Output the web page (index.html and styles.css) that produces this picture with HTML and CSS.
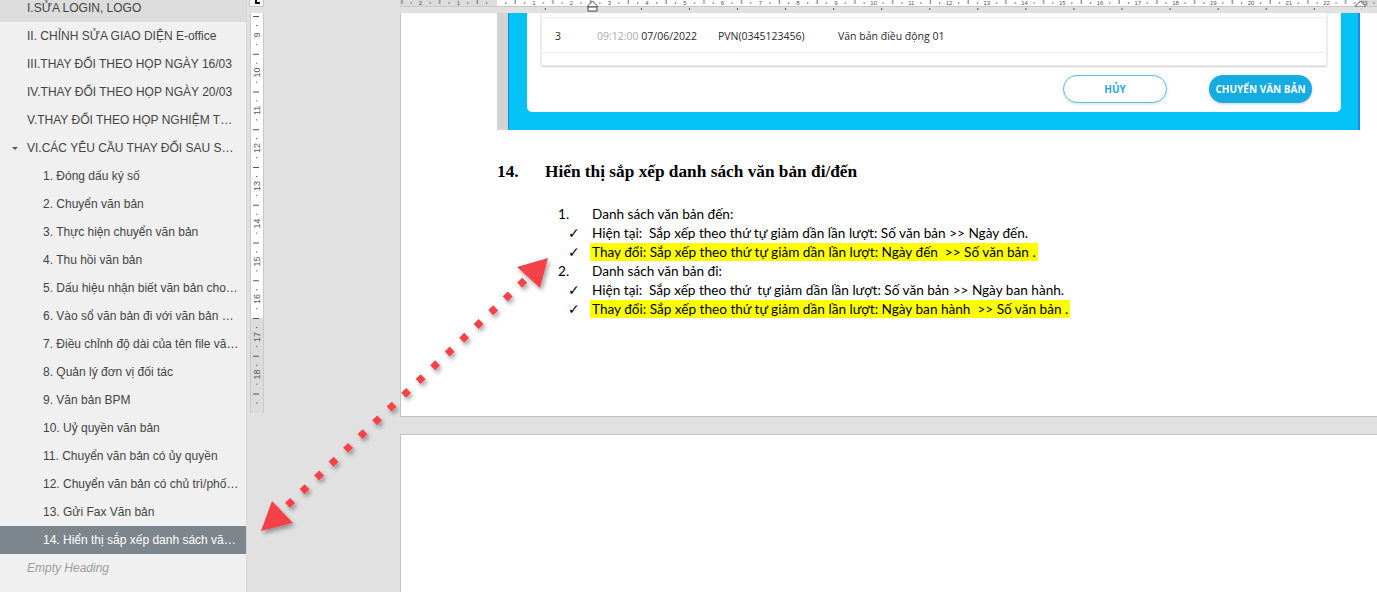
FILE: index.html
```html
<!DOCTYPE html>
<html lang="vi">
<head>
<meta charset="utf-8">
<title>Navigation</title>
<link rel="stylesheet" href="styles.css">
</head>
<body>
<div class="app">
  <aside class="nav">
    <ul class="nav-list">
      <li class="nav-item hover">I.SỬA LOGIN, LOGO</li>
      <li class="nav-item">II. CHỈNH SỬA GIAO DIỆN E-office</li>
      <li class="nav-item">III.THAY ĐỔI THEO HỌP NGÀY 16/03</li>
      <li class="nav-item">IV.THAY ĐỔI THEO HỌP NGÀY 20/03</li>
      <li class="nav-item">V.THAY ĐỔI THEO HỌP NGHIỆM T…</li>
      <li class="nav-item has-caret"><span class="caret"></span>VI.CÁC YÊU CẦU THAY ĐỔI SAU S…</li>
      <li class="nav-item sub">1. Đóng dấu ký số</li>
      <li class="nav-item sub">2. Chuyển văn bản</li>
      <li class="nav-item sub">3. Thực hiện chuyển văn bản</li>
      <li class="nav-item sub">4. Thu hồi văn bản</li>
      <li class="nav-item sub">5. Dấu hiệu nhận biết văn bản cho…</li>
      <li class="nav-item sub">6. Vào sổ văn bản đi với văn bản …</li>
      <li class="nav-item sub">7. Điều chỉnh độ dài của tên file vă…</li>
      <li class="nav-item sub">8. Quản lý đơn vị đối tác</li>
      <li class="nav-item sub">9. Văn bản BPM</li>
      <li class="nav-item sub">10. Uỷ quyền văn bản</li>
      <li class="nav-item sub">11. Chuyển văn bản có ủy quyền</li>
      <li class="nav-item sub">12. Chuyển văn bản có chủ trì/phố…</li>
      <li class="nav-item sub">13. Gửi Fax Văn bản</li>
      <li class="nav-item sub active">14. Hiển thị sắp xếp danh sách vă…</li>
      <li class="nav-item empty">Empty Heading</li>
    </ul>
  </aside>

  <main class="workspace">
    <div class="vcol">
      <div class="tab-sel"><span class="tab-l"></span></div>
      <div class="vruler">
        <svg width="12" height="400" viewBox="0 0 12 400">
          <defs>
            <pattern id="vt" x="0" y="3" width="12" height="37.75" patternUnits="userSpaceOnUse">
              <rect x="2" y="0" width="6" height="1" fill="#555"/>
              <rect x="5" y="9" width="1.5" height="1" fill="#666"/>
              <rect x="5" y="28" width="1.5" height="1" fill="#666"/>
            </pattern>
          </defs>
          <rect x="0" y="0" width="12" height="305" fill="#fff"/>
          <rect x="0" y="305" width="12" height="95" fill="#dcdcdc"/>
          <rect x="0" y="0" width="12" height="400" fill="url(#vt)"/>
          <g class="rnum" font-size="9" fill="#555" text-anchor="middle">
            <text x="6" y="22" transform="rotate(-90 6 22)" dy="3">9</text>
            <text x="6" y="59.6" transform="rotate(-90 6 59.6)" dy="3">10</text>
            <text x="6" y="97.4" transform="rotate(-90 6 97.4)" dy="3">11</text>
            <text x="6" y="135.1" transform="rotate(-90 6 135.1)" dy="3">12</text>
            <text x="6" y="172.9" transform="rotate(-90 6 172.9)" dy="3">13</text>
            <text x="6" y="210.6" transform="rotate(-90 6 210.6)" dy="3">14</text>
            <text x="6" y="248.4" transform="rotate(-90 6 248.4)" dy="3">15</text>
            <text x="6" y="286.1" transform="rotate(-90 6 286.1)" dy="3">16</text>
            <text x="6" y="323.9" transform="rotate(-90 6 323.9)" dy="3">17</text>
            <text x="6" y="361.6" transform="rotate(-90 6 361.6)" dy="3">18</text>
          </g>
        </svg>
      </div>
    </div>

    <div class="doc">
      <div class="hruler">
        <svg width="977" height="6" viewBox="0 0 977 6">
          <defs>
            <pattern id="ht" x="96" y="0" width="37.75" height="6" patternUnits="userSpaceOnUse">
              <rect x="9.2" y="2" width="1" height="2" fill="#777"/>
              <rect x="18.6" y="0" width="1" height="4" fill="#666"/>
              <rect x="28" y="2" width="1" height="2" fill="#777"/>
            </pattern>
          </defs>
          <rect x="0" y="0" width="977" height="6" fill="#dcdcdc"/>
          <rect x="97" y="0" width="862" height="6" fill="#fff"/>
          <rect x="0" y="0" width="977" height="6" fill="url(#ht)"/>
          <g class="rnum" font-size="6" fill="#555" text-anchor="middle">
            <text x="20.5" y="5">2</text><text x="58.3" y="5">1</text>
            <text x="133.8" y="5">1</text><text x="171.5" y="5">2</text><text x="209.3" y="5">3</text>
            <text x="247" y="5">4</text><text x="284.8" y="5">5</text><text x="322.5" y="5">6</text>
            <text x="360.3" y="5">7</text><text x="398" y="5">8</text><text x="435.8" y="5">9</text>
            <text x="473.5" y="5">10</text><text x="511.3" y="5">11</text><text x="549" y="5">12</text>
            <text x="586.8" y="5">13</text><text x="624.5" y="5">14</text><text x="662.3" y="5">15</text>
            <text x="700" y="5">16</text><text x="737.8" y="5">17</text><text x="775.5" y="5">18</text>
            <text x="813.3" y="5">19</text><text x="851" y="5">20</text><text x="888.8" y="5">21</text>
            <text x="926.5" y="5">22</text><text x="964.3" y="5">23</text>
          </g>
        </svg>
      </div>
      <div class="hband">
        <svg width="977" height="6" viewBox="0 0 977 6">
          <defs>
            <pattern id="bt" x="144.8" y="0" width="48.06" height="6" patternUnits="userSpaceOnUse">
              <rect x="0" y="1" width="1" height="2" fill="#555"/>
            </pattern>
          </defs>
          <rect x="144" y="0" width="818" height="6" fill="url(#bt)"/>
        </svg>
      </div>
      <svg class="indent-marker im-left" width="11" height="12" viewBox="0 0 11 12">
        <path d="M1 5.5 L5.5 1 L10 5.5 L10 7 L1 7 Z" fill="#fff" stroke="#444" stroke-width="1"/>
        <rect x="1" y="7" width="9" height="4" fill="#fff" stroke="#444" stroke-width="1"/>
      </svg>
      <svg class="indent-marker im-right" width="11" height="7" viewBox="0 0 11 7">
        <path d="M1 5.5 L5.5 1 L10 5.5 L10 7 L1 7 Z" fill="#fff" stroke="#444" stroke-width="1"/>
      </svg>

      <section class="page page1">
        <div class="shot">
          <div class="shot-gray"></div>
          <div class="shot-frame">
            <div class="card">
              <div class="tbl">
                <div class="tbl-head"></div>
                <div class="tbl-row">
                  <span>3</span>
                  <span><span class="time">09:12:00</span> 07/06/2022</span>
                  <span>PVN(0345123456)</span>
                  <span>Văn bản điều động 01</span>
                </div>
              </div>
              <div class="btns">
                <button class="btn btn-ghost" type="button">HỦY</button>
                <button class="btn btn-solid" type="button">CHUYỂN VĂN BẢN</button>
              </div>
            </div>
          </div>
        </div>

        <h2 class="heading"><span class="hnum">14.</span>Hiển thị sắp xếp danh sách văn bản đi/đến</h2>

        <div class="list">
          <div class="li num"><span class="mk">1.</span><span>Danh sách văn bản đến:</span></div>
          <div class="li chk"><span class="mk">✓</span><span>Hiện tại:  Sắp xếp theo thứ tự giảm dần lần lượt: Số văn bản &gt;&gt; Ngày đến.</span></div>
          <div class="li chk"><span class="mk">✓</span><span class="hl">Thay đổi: Sắp xếp theo thứ tự giảm dần lần lượt: Ngày đến  &gt;&gt; Số văn bản .</span></div>
          <div class="li num"><span class="mk">2.</span><span>Danh sách văn bản đi:</span></div>
          <div class="li chk"><span class="mk">✓</span><span>Hiện tại:  Sắp xếp theo thứ  tự giảm dần lần lượt: Số văn bản &gt;&gt; Ngày ban hành.</span></div>
          <div class="li chk"><span class="mk">✓</span><span class="hl">Thay đổi: Sắp xếp theo thứ tự giảm dần lần lượt: Ngày ban hành  &gt;&gt; Số văn bản .</span></div>
        </div>
      </section>

      <section class="page page2"></section>
    </div>
  </main>
</div>

<svg class="arrow" width="1377" height="592" viewBox="0 0 1377 592">
  <defs>
    <filter id="sh" x="-10%" y="-10%" width="130%" height="130%">
      <feDropShadow dx="2" dy="3" stdDeviation="2" flood-color="#000" flood-opacity="0.35"/>
    </filter>
  </defs>
  <g filter="url(#sh)" fill="#f5434a">
    <line x1="287.5" y1="505.4" x2="524.7" y2="280.3" stroke="#f5434a" stroke-width="7" stroke-dasharray="7 13"/>
    <polygon points="261,531 272,501 293,523"/>
    <polygon points="548,258 517,267 540,288"/>
  </g>
</svg>
</body>
</html>
```

FILE: styles.css
```css
* { box-sizing: border-box; }

html, body {
  margin: 0;
  padding: 0;
}

body {
  width: 1377px;
  height: 592px;
  overflow: hidden;
  position: relative;
  background: #e1e1e1;
  font-family: "Liberation Sans", Arial, sans-serif;
}

.app {
  display: flex;
  height: 592px;
}

/* ---------- navigation pane ---------- */
.nav {
  width: 247px;
  flex: none;
  background: #f0f0f0;
  border-right: 1px solid #d6d6d6;
  overflow: hidden;
}

.nav-list {
  list-style: none;
  margin: -6px 0 0;
  padding: 0;
}

.nav-item {
  height: 28px;
  display: flex;
  align-items: center;
  padding-left: 27px;
  font-size: 12px;
  color: #444;
  white-space: nowrap;
  overflow: hidden;
}

.nav-item.sub { padding-left: 43px; }
.nav-item.hover { background: #dcdcdc; }
.nav-item.active { background: #7e868d; color: #fff; }
.nav-item.empty { color: #9c9c9c; font-style: italic; }
.nav-item.has-caret { padding-left: 12px; }

.caret {
  width: 0;
  height: 0;
  border-left: 3px solid transparent;
  border-right: 3px solid transparent;
  border-top: 3px solid #555;
  margin-right: 9px;
}

/* ---------- workspace ---------- */
.workspace {
  flex: 1;
  display: flex;
  min-width: 0;
}

.vcol {
  width: 153px;
  flex: none;
}

.tab-sel {
  width: 15px;
  height: 7px;
  margin-left: 2px;
  background: #f3f3f3;
  border: 1px solid #c6c6c6;
  border-top: none;
  position: relative;
  overflow: hidden;
}

.tab-l {
  display: block;
  width: 5px;
  height: 4px;
  margin: 0 0 0 5px;
  border-left: 2px solid #111;
  border-bottom: 2px solid #111;
}

.vruler {
  width: 14px;
  height: 400px;
  margin: 6px 0 0 3px;
  border: 1px solid #c9c9c9;
  border-top: none;
  border-bottom: none;
}

.vruler svg, .hruler svg, .hband svg { display: block; }

.rnum { font-family: "Liberation Sans", Arial, sans-serif; }

.doc {
  flex: 1;
  min-width: 0;
  overflow: hidden;
  position: relative;
}

.hruler {
  height: 7px;
  border-bottom: 1px solid #c8c8c8;
  overflow: hidden;
}

.hband {
  height: 6px;
}

.indent-marker {
  position: absolute;
  top: 0;
}
.im-left { left: 187px; }
.im-right { left: 955px; }

/* ---------- pages ---------- */
.page {
  width: 1000px;
  background: #fff;
  border-left: 1px solid #c4c4c6;
}

.page1 {
  height: 404px;
  border-bottom: 1px solid #c4c4c6;
  padding-left: 96px;
  overflow: hidden;
}

.page2 {
  height: 200px;
  margin-top: 17px;
  border-top: 1px solid #c4c4c6;
}

/* embedded screenshot */
.shot {
  display: flex;
  width: 863px;
  height: 117px;
}

.shot-gray {
  width: 11px;
  background: #d3d3d3;
}

.shot-frame {
  flex: 1;
  display: flex;
  background: #02c2f6;
  border-left: 1px solid #1f86e0;
  border-right: 2px solid #1f86e0;
  padding: 0 17px 18px 18px;
}

.card {
  flex: 1;
  display: flex;
  flex-direction: column;
  background: #fff;
  border-radius: 0 0 5px 5px;
  padding: 0 14px;
  font-family: "Open Sans", "Noto Sans", sans-serif;
}

.tbl {
  height: 53px;
  border: 1px solid #e9ebef;
  border-top: none;
  box-shadow: 0 1px 2px rgba(0, 0, 0, 0.2);
  display: flex;
  flex-direction: column;
}

.tbl-head {
  height: 5px;
  border-bottom: 1px solid #eceef2;
}

.tbl-row {
  height: 35px;
  display: grid;
  grid-template-columns: 42px 121px 120px 1fr;
  align-items: center;
  padding-left: 13px;
  padding-top: 2px;
  border-bottom: 1px solid #eceef2;
  font-size: 10.5px;
  color: #2a2a2a;
}

.time { color: #ababab; }

.btns {
  display: flex;
  justify-content: flex-end;
  gap: 42px;
  margin-top: 9px;
  padding-right: 15px;
}

.btn {
  height: 28px;
  border-radius: 14px;
  display: flex;
  align-items: center;
  justify-content: center;
  font-family: "Open Sans", "Noto Sans", sans-serif;
  font-weight: 700;
  font-size: 10px;
  padding: 0;
}

.btn-ghost {
  width: 104px;
  background: #fff;
  border: 1px solid #55c3ec;
  color: #22a9dd;
  box-shadow: 0 1px 3px rgba(0, 0, 0, 0.15);
}

.btn-solid {
  width: 103px;
  background: #14ace1;
  border: none;
  color: #fff;
  box-shadow: 0 1px 3px rgba(0, 0, 0, 0.2);
}

/* heading */
.heading {
  margin: 32px 0 0;
  height: 20px;
  line-height: 20px;
  font-family: "Liberation Serif", "Times New Roman", serif;
  font-weight: 700;
  font-size: 17.3px;
  color: #000;
  display: flex;
}

.hnum { width: 48px; }

/* list */
.list {
  margin-top: 22px;
  font-family: Lato, "Carlito", sans-serif;
  font-size: 13.6px;
  color: #000;
}

.li {
  display: flex;
  align-items: center;
  height: 19px;
  white-space: pre;
}

.li .mk { width: 95px; flex: none; }
.li.num .mk { padding-left: 61px; }
.li.chk .mk {
  padding-left: 71px;
  font-family: "DejaVu Sans", sans-serif;
  font-size: 14px;
}

.hl {
  background: #ffff00;
  margin-left: -2px;
  padding: 1px 2px;
}

/* overlay arrow */
.arrow {
  position: absolute;
  top: 0;
  left: 0;
  pointer-events: none;
}
```
